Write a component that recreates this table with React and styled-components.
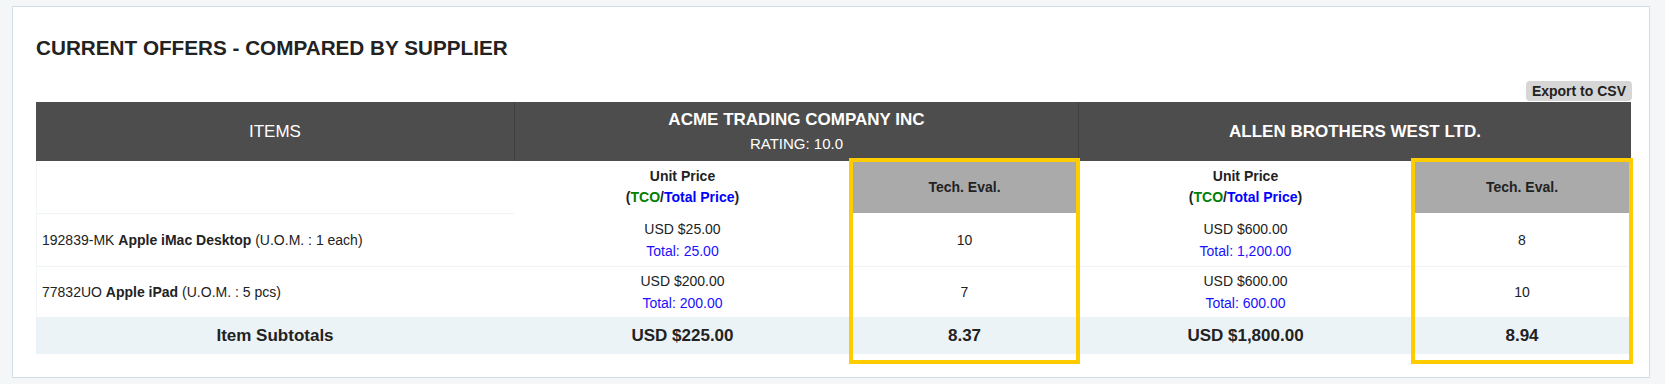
import React from "react";
import styled, { createGlobalStyle } from "styled-components";

const GlobalStyle = createGlobalStyle`
  html, body {
    margin: 0;
    padding: 0;
    background: #f5f6f7;
    font-family: "Liberation Sans", Arial, sans-serif;
    color: #222;
  }
`;

const Page = styled.div`
  padding: 6px 15px 6px 12px;
`;

const Panel = styled.section`
  background: #fff;
  border: 1px solid #cfdfe5;
  padding: 29px 17px 23px 23px;
`;

const Title = styled.h2`
  margin: 0;
  font-size: 20.7px;
  line-height: 24px;
  font-weight: 700;
  color: #222;
  text-transform: uppercase;
`;

const Toolbar = styled.div`
  display: flex;
  justify-content: flex-end;
  margin: 21px 0 1px;
`;

const ExportButton = styled.button`
  font-family: inherit;
  font-size: 14px;
  font-weight: 700;
  line-height: 16px;
  height: 20px;
  padding: 0 6px;
  color: #222;
  background: #d6d6d6;
  border: none;
  border-radius: 4px;
`;

const Grid = styled.div`
  display: grid;
  grid-template-columns: 478px 337px 227px 335px 218px;
  grid-template-rows: 59px 52px 53px 51px 37px;
`;

const HeadCell = styled.div`
  grid-column: ${(p) => p.$span};
  background: #4d4d4d;
  color: #fff;
  display: flex;
  flex-direction: column;
  align-items: center;
  justify-content: center;
  text-align: center;
  border-left: ${(p) => (p.$divider ? "1px solid #3f3f3f" : "none")};
`;

const HeadTitle = styled.div`
  font-size: 17px;
  line-height: 20px;
  font-weight: ${(p) => (p.$bold ? 700 : 400)};
`;

const Rating = styled.div`
  font-size: 15px;
  line-height: 20px;
  margin-top: 4px;
`;

const Cell = styled.div`
  grid-column: ${(p) => p.$col};
  grid-row: ${(p) => p.$row};
  display: flex;
  flex-direction: column;
  justify-content: center;
  align-items: ${(p) => (p.$left ? "flex-start" : "center")};
  text-align: ${(p) => (p.$left ? "left" : "center")};
  padding: ${(p) => (p.$left ? "0 0 0 5px" : "0")};
  font-size: 14px;
  line-height: 22px;
  color: #222;
  background: ${(p) => (p.$gray ? "#aaaaaa" : "transparent")};
  border-top: ${(p) => (p.$line ? "1px solid #eef3f5" : "none")};
  border-left: ${(p) => (p.$left ? "1px solid #f2f6f8" : "none")};
`;

const SubHead = styled.div`
  font-size: 14px;
  line-height: 21px;
  font-weight: 700;
  color: #222;
`;

const Tco = styled.span`
  color: #008000;
`;

const TotalPrice = styled.span`
  color: #0000ff;
`;

const ItemText = styled.div`
  font-size: 14px;
  line-height: 18px;
  color: #222;

  b {
    font-weight: 700;
  }
`;

const Total = styled.div`
  color: #1a10ff;
`;

const SubtotalRow = styled.div`
  grid-column: 1 / 6;
  grid-row: 5;
  background: #ecf3f6;
`;

const SubtotalCell = styled.div`
  grid-column: ${(p) => p.$col};
  grid-row: 5;
  display: flex;
  align-items: center;
  justify-content: center;
  font-size: 17px;
  font-weight: 700;
  color: #222;
  z-index: 1;
`;

const Highlight = styled.div`
  grid-column: ${(p) => p.$col};
  grid-row: 2 / 6;
  margin: -3px -2px -10px -2px;
  border: 4px solid #ffcc00;
  pointer-events: none;
  z-index: 2;
`;

const suppliers = [
  {
    name: "ACME TRADING COMPANY INC",
    rating: "10.0",
    prices: [
      { unit: "USD $25.00", total: "Total: 25.00", eval: "10" },
      { unit: "USD $200.00", total: "Total: 200.00", eval: "7" },
    ],
    subtotal: "USD $225.00",
    evalTotal: "8.37",
  },
  {
    name: "ALLEN BROTHERS WEST LTD.",
    prices: [
      { unit: "USD $600.00", total: "Total: 1,200.00", eval: "8" },
      { unit: "USD $600.00", total: "Total: 600.00", eval: "10" },
    ],
    subtotal: "USD $1,800.00",
    evalTotal: "8.94",
  },
];

const items = [
  { code: "192839-MK", name: "Apple iMac Desktop", uom: "1 each" },
  { code: "77832UO", name: "Apple iPad", uom: "5 pcs" },
];

export default function App() {
  return (
    <>
      <GlobalStyle />
      <Page>
        <Panel>
          <Title>Current Offers - Compared by Supplier</Title>
          <Toolbar>
            <ExportButton>Export to CSV</ExportButton>
          </Toolbar>
          <Grid>
            <HeadCell $span="1">
              <HeadTitle>ITEMS</HeadTitle>
            </HeadCell>
            {suppliers.map((s, i) => (
              <HeadCell key={s.name} $span={`${2 + i * 2} / span 2`} $divider>
                <HeadTitle $bold>{s.name}</HeadTitle>
                {s.rating && <Rating>RATING: {s.rating}</Rating>}
              </HeadCell>
            ))}

            <Cell $col={1} $row={2} $left />
            {suppliers.map((s, i) => (
              <React.Fragment key={s.name + "-sub"}>
                <Cell $col={2 + i * 2} $row={2}>
                  <SubHead>Unit Price</SubHead>
                  <SubHead>
                    (<Tco>TCO</Tco>/<TotalPrice>Total Price</TotalPrice>)
                  </SubHead>
                </Cell>
                <Cell $col={3 + i * 2} $row={2} $gray>
                  <SubHead>Tech. Eval.</SubHead>
                </Cell>
              </React.Fragment>
            ))}

            {items.map((it, r) => (
              <React.Fragment key={it.code}>
                <Cell $col={1} $row={3 + r} $left $line>
                  <ItemText>
                    {it.code} <b>{it.name}</b> (U.O.M. : {it.uom})
                  </ItemText>
                </Cell>
                {suppliers.map((s, i) => (
                  <React.Fragment key={s.name + it.code}>
                    <Cell $col={2 + i * 2} $row={3 + r} $line={r > 0}>
                      <div>{s.prices[r].unit}</div>
                      <Total>{s.prices[r].total}</Total>
                    </Cell>
                    <Cell $col={3 + i * 2} $row={3 + r} $line={r > 0}>
                      <div>{s.prices[r].eval}</div>
                    </Cell>
                  </React.Fragment>
                ))}
              </React.Fragment>
            ))}

            <SubtotalRow />
            <SubtotalCell $col={1}>Item Subtotals</SubtotalCell>
            {suppliers.map((s, i) => (
              <React.Fragment key={s.name + "-total"}>
                <SubtotalCell $col={2 + i * 2}>{s.subtotal}</SubtotalCell>
                <SubtotalCell $col={3 + i * 2}>{s.evalTotal}</SubtotalCell>
              </React.Fragment>
            ))}

            {suppliers.map((s, i) => (
              <Highlight key={s.name + "-hl"} $col={3 + i * 2} />
            ))}
          </Grid>
        </Panel>
      </Page>
    </>
  );
}
